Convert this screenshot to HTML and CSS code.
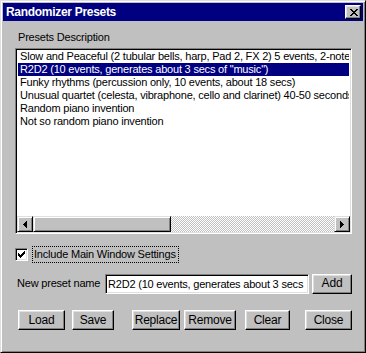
FILE: index.html
```
<!DOCTYPE html>
<html>
<head>
<meta charset="utf-8">
<link rel="stylesheet" href="styles.css">
</head>
<body>
<div class="window">
  <div class="titlebar">
    <span class="title">Randomizer Presets</span>
    <div class="closebtn">
      <svg width="8" height="7" viewBox="0 0 8 7" shape-rendering="crispEdges"><path d="M0 0h2v1h-2zM6 0h2v1h-2zM1 1h2v1h-2zM5 1h2v1h-2zM2 2h4v1h-4zM3 3h2v1h-2zM2 4h4v1h-4zM1 5h2v1h-2zM5 5h2v1h-2zM0 6h2v1h-2zM6 6h2v1h-2z" fill="#000"/></svg>
    </div>
  </div>
  <div class="content">
    <div class="label">Presets Description</div>
    <div class="listbox">
      <div class="rows">
        <div class="row">Slow and Peaceful (2 tubular bells, harp, Pad 2, FX 2) 5 events, 2-note chords</div>
        <div class="row selected">R2D2 (10 events, generates about 3 secs of "music")</div>
        <div class="row">Funky rhythms (percussion only, 10 events, about 18 secs)</div>
        <div class="row">Unusual quartet (celesta, vibraphone, cello and clarinet) 40-50 seconds</div>
        <div class="row">Random piano invention</div>
        <div class="row">Not so random piano invention</div>
      </div>
      <div class="hscroll">
        <div class="sbtn">
          <svg width="4" height="7" viewBox="0 0 4 7" shape-rendering="crispEdges"><path d="M3 0h1v7h-1zM2 1h1v5h-1zM1 2h1v3h-1zM0 3h1v1h-1z" fill="#000"/></svg>
        </div>
        <div class="thumb"></div>
        <div class="track"></div>
        <div class="sbtn">
          <svg width="4" height="7" viewBox="0 0 4 7" shape-rendering="crispEdges"><path d="M0 0h1v7h-1zM1 1h1v5h-1zM2 2h1v3h-1zM3 3h1v1h-1z" fill="#000"/></svg>
        </div>
      </div>
    </div>
    <div class="checkrow">
      <div class="checkbox">
        <svg width="7" height="7" viewBox="0 0 7 7" shape-rendering="crispEdges"><path d="M6 0h1v3h-1zM5 1h1v3h-1zM4 2h1v3h-1zM3 3h1v3h-1zM2 4h1v3h-1zM1 3h1v3h-1zM0 2h1v3h-1z" fill="#000"/></svg>
      </div>
      <span class="focus">Include Main Window Settings</span>
    </div>
    <div class="namerow">
      <span class="namelabel">New preset name</span>
      <input class="textbox" type="text" value='R2D2 (10 events, generates about 3 secs of "music")'>
      <div class="btn b-add">Add</div>
    </div>
    <div class="btnrow">
      <div class="btn b-load">Load</div>
      <div class="btn b-save">Save</div>
      <div class="btn b-replace">Replace</div>
      <div class="btn b-remove">Remove</div>
      <div class="btn b-clear">Clear</div>
      <div class="btn b-close">Close</div>
    </div>
  </div>
</div>
</body>
</html>
```
FILE: styles.css
```
html, body {
  margin: 0;
  padding: 0;
  background: #c0c0c0;
}
body {
  font-family: "Liberation Sans", Arial, sans-serif;
  font-size: 11px;
  line-height: 13px;
  letter-spacing: -0.2px;
  color: #000;
}
.window {
  width: 366px;
  height: 353px;
  box-sizing: border-box;
  background: #c0c0c0;
  border: 1px solid;
  border-color: #dfdfdf #000 #000 #dfdfdf;
  box-shadow: inset 1px 1px #fff, inset -1px -1px #808080;
  padding: 2px;
}
.titlebar {
  height: 18px;
  background: #000080;
  display: flex;
  align-items: center;
  justify-content: space-between;
  padding: 0 2px 0 3px;
}
.title {
  color: #fff;
  font-weight: bold;
  font-size: 12px;
  letter-spacing: -0.3px;
}
.closebtn {
  width: 16px;
  height: 14px;
  box-sizing: border-box;
  background: #c0c0c0;
  border: 1px solid;
  border-color: #fff #000 #000 #fff;
  box-shadow: inset -1px -1px #808080, inset 1px 1px #dfdfdf;
  display: flex;
  align-items: center;
  justify-content: center;
  padding-left: 1px;
}
.closebtn svg { display: block; }
.content {
  padding: 10px 11px 0 12px;
}
.label {
  padding-left: 3px;
  margin-bottom: 4px;
}
.listbox {
  width: 337px;
  height: 186px;
  box-sizing: border-box;
  background: #fff;
  border: 1px solid;
  border-color: #808080 #fff #fff #808080;
  box-shadow: inset 1px 1px #000, inset -1px -1px #dfdfdf;
  padding: 1px;
  display: flex;
  flex-direction: column;
}
.rows {
  flex: 1;
  overflow: hidden;
}
.row {
  height: 13px;
  white-space: nowrap;
  overflow: hidden;
  padding-left: 2px;
  margin-left: 1px;
  margin-right: 1px;
}
.row.selected {
  background: #000080;
  color: #fff;
}
.hscroll {
  height: 16px;
  display: flex;
}
.sbtn, .thumb {
  box-sizing: border-box;
  background: #c0c0c0;
  border: 1px solid;
  border-color: #dfdfdf #000 #000 #dfdfdf;
  box-shadow: inset 1px 1px #fff, inset -1px -1px #808080;
}
.sbtn {
  width: 16px;
  height: 16px;
  display: flex;
  align-items: center;
  justify-content: center;
}
.sbtn svg { display: block; }
.thumb {
  width: 138px;
  height: 16px;
}
.track {
  flex: 1;
  background: repeating-conic-gradient(#fff 0 25%, #c0c0c0 0 50%) 0 0 / 2px 2px;
}
.checkrow {
  display: flex;
  align-items: center;
  margin-top: 12px;
  height: 17px;
}
.checkbox {
  width: 13px;
  height: 13px;
  box-sizing: border-box;
  background: #fff;
  border: 1px solid;
  border-color: #808080 #fff #fff #808080;
  box-shadow: inset 1px 1px #000, inset -1px -1px #dfdfdf;
  display: flex;
  align-items: center;
  justify-content: center;
}
.checkbox svg { display: block; }
.focus {
  margin-left: 4px;
  height: 17px;
  box-sizing: border-box;
  border: 1px dotted #000;
  padding: 1px 2px 0 1px;
  white-space: nowrap;
}
.namerow {
  display: flex;
  align-items: center;
  margin-top: 10px;
  height: 21px;
}
.namelabel {
  padding-left: 2px;
  width: 88px;
  white-space: nowrap;
}
.textbox {
  width: 204px;
  height: 20px;
  box-sizing: border-box;
  margin: 0;
  background: #fff;
  border: 1px solid;
  border-color: #808080 #fff #fff #808080;
  box-shadow: inset 1px 1px #000, inset -1px -1px #dfdfdf;
  font: 11px "Liberation Sans", Arial, sans-serif;
  letter-spacing: -0.2px;
  color: #000;
  padding: 0 2px;
  outline: none;
}
.btn {
  height: 20px;
  box-sizing: border-box;
  background: #c0c0c0;
  border: 1px solid;
  border-color: #fff #000 #000 #fff;
  box-shadow: inset -1px -1px #808080, inset 1px 1px #dfdfdf;
  display: flex;
  align-items: center;
  justify-content: center;
  white-space: nowrap;
  font-size: 12px;
}
.b-add { width: 40px; margin-left: 3px; }
.btnrow {
  display: flex;
  margin-top: 16px;
}
.b-load { width: 47px; margin-left: 3px; }
.b-save { width: 42px; margin-left: 7px; }
.b-replace { width: 48px; margin-left: 18px; }
.b-remove { width: 52px; margin-left: 4px; }
.b-clear { width: 45px; margin-left: 9px; }
.b-close { width: 47px; margin-left: 15px; }
```
